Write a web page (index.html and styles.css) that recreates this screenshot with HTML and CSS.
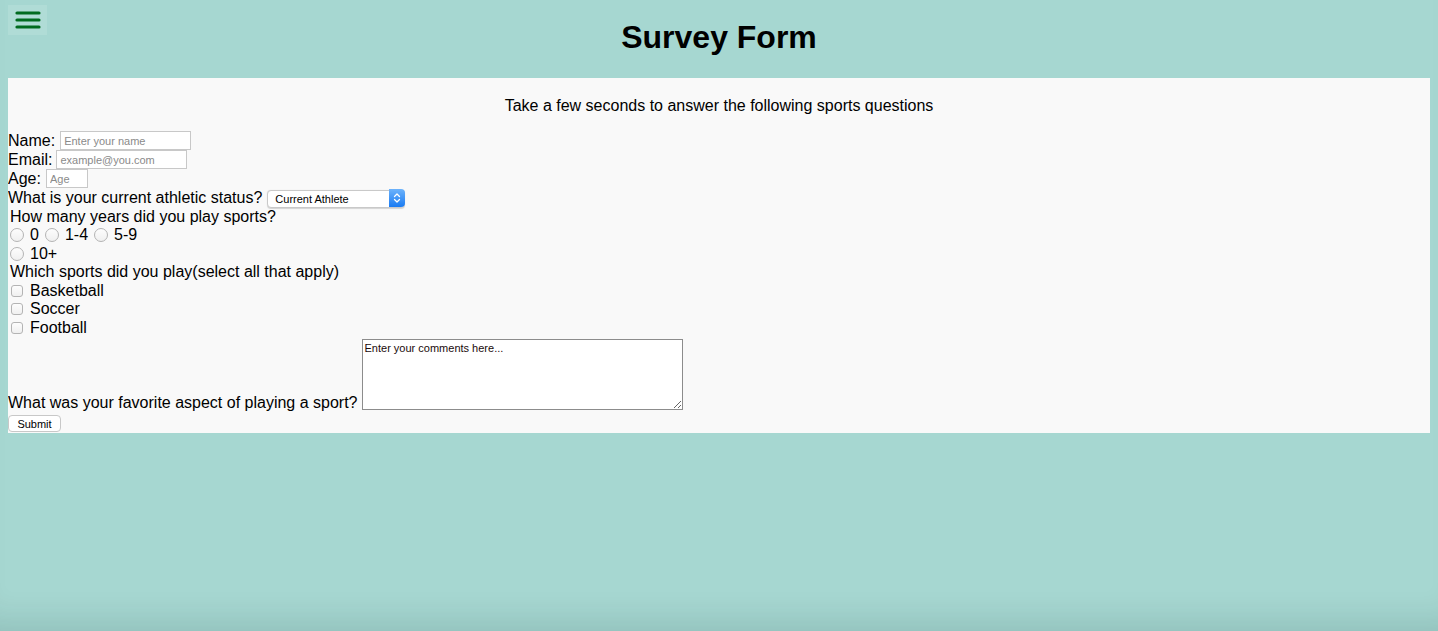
FILE: index.html
```html
<!DOCTYPE html>
<html lang="en">
<head>
<meta charset="utf-8">
<title>Survey Form</title>
<link rel="stylesheet" href="styles.css">
</head>
<body>
<button class="menu-btn" type="button" aria-label="Menu">
  <svg width="26" height="20" viewBox="0 0 26 20">
    <g stroke="#006b1f" stroke-width="3.2" stroke-linecap="round">
      <line x1="2" y1="3" x2="24" y2="3"/>
      <line x1="2" y1="10" x2="24" y2="10"/>
      <line x1="2" y1="17" x2="24" y2="17"/>
    </g>
  </svg>
</button>
<header class="header">
  <h1 class="title">Survey Form</h1>
</header>
<main class="panel">
  <p class="intro">Take a few seconds to answer the following sports questions</p>
  <form class="form">
    <div class="row"><label>Name:</label><input class="field f-name" type="text" placeholder="Enter your name"></div>
    <div class="row"><label>Email:</label><input class="field f-email" type="email" placeholder="example@you.com"></div>
    <div class="row"><label>Age:</label><input class="field f-age" type="number" placeholder="Age"></div>
    <div class="row"><label>What is your current athletic status?</label>
      <span class="select-wrap">
        <select class="select"><option>Current Athlete</option><option>Former Athlete</option></select>
        <span class="select-arrows"><svg width="8" height="12" viewBox="0 0 8 12"><path d="M1.5 4.5 L4 2 L6.5 4.5 M1.5 7.5 L4 10 L6.5 7.5" fill="none" stroke="#fff" stroke-width="1.3" stroke-linecap="round" stroke-linejoin="round"/></svg></span>
      </span>
    </div>
    <div class="row ind">How many years did you play sports?</div>
    <div class="row ind radios">
      <label class="opt"><span class="radio"></span>0</label>
      <label class="opt"><span class="radio"></span>1-4</label>
      <label class="opt"><span class="radio"></span>5-9</label>
    </div>
    <div class="row ind radios"><label class="opt"><span class="radio"></span>10+</label></div>
    <div class="row ind r18">Which sports did you play(select all that apply)</div>
    <div class="row ind r18"><label class="opt"><span class="check"></span>Basketball</label></div>
    <div class="row ind r18"><label class="opt"><span class="check"></span>Soccer</label></div>
    <div class="row ind"><label class="opt"><span class="check"></span>Football</label></div>
    <div class="row-text"><label class="ta-label">What was your favorite aspect of playing a sport?</label><textarea class="comments">Enter your comments here...</textarea></div>
    <button class="submit" type="button">Submit</button>
  </form>
</main>
</body>
</html>
```
FILE: styles.css
```css
html {
  background: #a6d7d1;
  min-height: 100%;
  box-shadow: inset 0 -34px 30px -22px rgba(0, 40, 40, 0.12);
}
body {
  margin: 8px;
  min-height: calc(100vh - 16px);
  font-family: "Liberation Sans", Arial, Helvetica, sans-serif;
  font-size: 16px;
  color: #000;
}
.menu-btn {
  position: absolute;
  top: 5px;
  left: 8px;
  width: 39px;
  height: 30px;
  padding: 0;
  border: none;
  background: #b0dcd6;
  display: flex;
  align-items: center;
  justify-content: center;
}
.header {
  padding-top: 11px;
}
.title {
  margin: 0 0 22px;
  font-size: 32px;
  line-height: 37px;
  text-align: center;
  font-weight: bold;
}
.panel {
  background: #f9f9f9;
  padding-bottom: 1px;
}
.intro {
  margin: 0;
  padding: 19px 0 16px;
  text-align: center;
  line-height: 18px;
}
.form {
  display: flex;
  flex-direction: column;
}
.row {
  height: 19px;
  display: flex;
  align-items: center;
  white-space: nowrap;
}
.row.r18 { height: 18.5px; }
.row.radios { height: 18.5px; }
.ind { padding-left: 2px; }
.field {
  box-sizing: border-box;
  height: 19px;
  margin: 1px 0 0 4px;
  padding: 1px 3px;
  border: 1px solid #c8c8c8;
  background: #fff;
  font-family: "Liberation Sans", Arial, sans-serif;
  font-size: 11px;
  align-self: flex-end;
}
.field::placeholder { color: #8a8a8a; }
.f-name { width: 131px; margin-left: 5px; }
.f-email { width: 131px; }
.f-age { width: 42px; margin-left: 5px; -moz-appearance: textfield; appearance: textfield; }
.f-age::-webkit-inner-spin-button, .f-age::-webkit-outer-spin-button { -webkit-appearance: none; margin: 0; }
.select-wrap {
  position: relative;
  display: inline-block;
  margin-left: 5px;
  height: 18px;
  align-self: flex-end;
  margin-bottom: 0;
}
.select {
  -webkit-appearance: none;
  appearance: none;
  box-sizing: border-box;
  width: 138px;
  height: 18px;
  padding: 0 20px 0 7px;
  border: 1px solid #c9c9c9;
  border-radius: 4px;
  background: #fff;
  font-family: "Liberation Sans", Arial, sans-serif;
  font-size: 11px;
  color: #000;
  box-shadow: 0 0.5px 1px rgba(0, 0, 0, 0.15);
}
.select-arrows {
  position: absolute;
  right: 0;
  top: 0;
  width: 16px;
  height: 18px;
  border-radius: 0 4px 4px 0;
  background: linear-gradient(#6db3fb, #1a7bf2);
  display: flex;
  align-items: center;
  justify-content: center;
}
.opt {
  display: inline-flex;
  align-items: center;
  margin-right: 6px;
}
.radio {
  box-sizing: border-box;
  width: 14px;
  height: 14px;
  margin: 0 6px 0 0;
  border: 1px solid #b4b4b4;
  border-radius: 50%;
  background: linear-gradient(#fdfdfd, #f0f0f0);
}
.check {
  box-sizing: border-box;
  width: 12px;
  height: 12px;
  margin: 0 7px 0 1px;
  border: 1px solid #b4b4b4;
  border-radius: 3px;
  background: linear-gradient(#fdfdfd, #f0f0f0);
}
.row-text {
  display: flex;
  align-items: flex-end;
  margin-top: 1.5px;
  white-space: nowrap;
}
.ta-label {
  line-height: 18px;
  padding-bottom: 2px;
}
.comments {
  box-sizing: border-box;
  width: 321px;
  height: 71px;
  margin: 0 0 4px 4px;
  padding: 2px 2px;
  border: 1px solid #8c8c8c;
  background: #fff;
  font-family: "Liberation Sans", Arial, sans-serif;
  font-size: 11px;
  color: #1a0a0a;
  resize: both;
}
.submit {
  align-self: flex-start;
  box-sizing: border-box;
  width: 53px;
  height: 17px;
  margin: 1px 0 0;
  padding: 0;
  border: 1px solid #c8c8c8;
  border-radius: 4px;
  background: #fff;
  font-family: "Liberation Sans", Arial, sans-serif;
  font-size: 11px;
  color: #000;
}
```
